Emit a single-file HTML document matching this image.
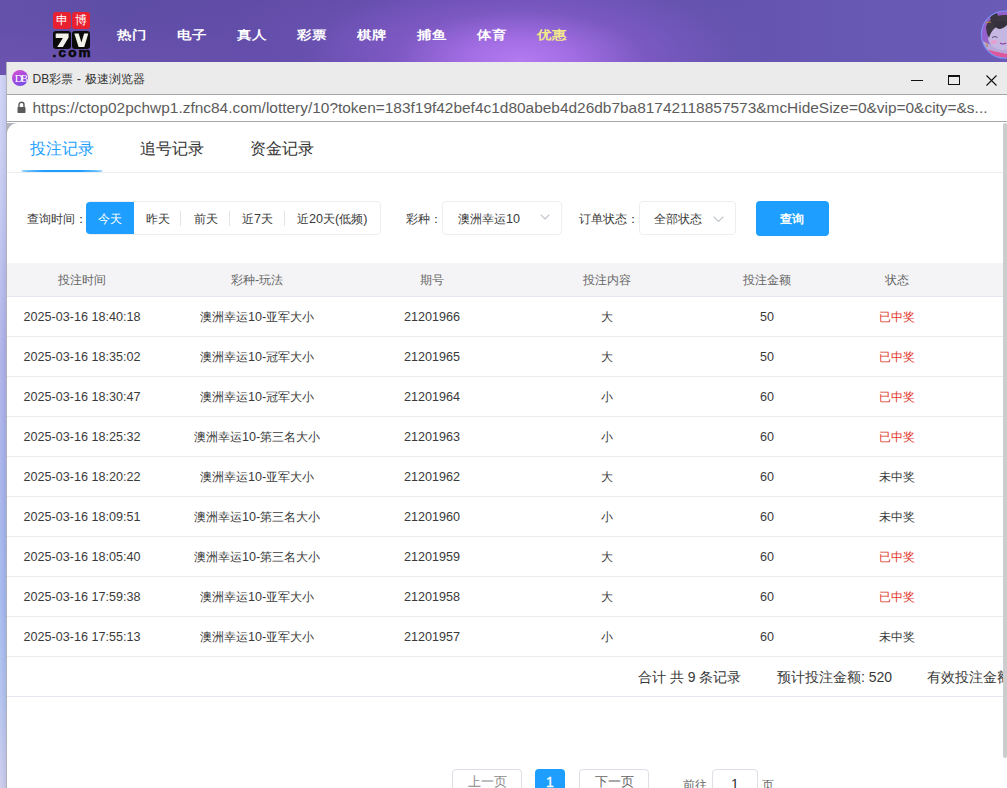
<!DOCTYPE html>
<html><head><meta charset="utf-8">
<style>
*{box-sizing:border-box;margin:0;padding:0}
html,body{width:1007px;height:788px;overflow:hidden;background:#fff;font-family:"Liberation Sans",sans-serif;position:relative}
.a{position:absolute}
.t{position:absolute;white-space:nowrap}
#hdr{left:0;top:0;width:1007px;height:76px;
 background:
  radial-gradient(ellipse 215px 85px at 520px 60px, rgba(180,122,240,1) 0%, rgba(168,112,232,0.9) 25%, rgba(140,95,210,0.5) 58%, rgba(120,80,190,0) 100%),
  radial-gradient(ellipse 330px 100px at 440px 45px, rgba(128,90,198,0.6) 0%, rgba(125,88,195,0) 100%),
  radial-gradient(ellipse 300px 60px at 0px 75px, rgba(112,84,178,0.8) 0%, rgba(112,84,178,0) 100%),
  linear-gradient(90deg,#6351aa 0%,#5a4aa1 25%,#5b4aa2 45%,#6555b0 75%,#6a5cb6 100%);}
</style></head><body>
<div class="a" id="hdr"></div>
<div class="a" style="left:53px;top:12px;width:18px;height:17px;background:#e8202f;border-radius:3px"></div>
<div class="a" style="left:72px;top:12px;width:18px;height:17px;background:#e8202f;border-radius:3px"></div>
<div class="t" style="left:53.0px;top:12px;width:18px;text-align:center;line-height:17px;font-size:12px;color:#fff">申</div>
<div class="t" style="left:72.0px;top:12px;width:18px;text-align:center;line-height:17px;font-size:12px;color:#fff">博</div>
<div class="a" style="left:53px;top:31px;width:18px;height:18px;background:#0a0a0a;border-radius:3px"></div>
<div class="a" style="left:72px;top:31px;width:18px;height:18px;background:#0a0a0a;border-radius:3px"></div>
<svg class="a" style="left:0;top:0" width="100" height="60" viewBox="0 0 100 60"><path d="M55.7 33.5H68.6V37.6L62.9 47.1H57.2L62.9 37.9H55.7Z" fill="#f2f2ea"/><path d="M74.3 33.5H78.7L81.4 42.6L84.1 33.5H88.3L84.3 47.1H78.6Z" fill="#f2f2ea"/></svg>
<div class="t" style="left:52.5px;top:46.4px;line-height:14px;font-size:13.5px;font-weight:bold;color:#0a0a0a;letter-spacing:2.2px;-webkit-text-stroke:0.6px #0a0a0a">.com</div>
<div class="t" style="left:117px;top:26.7px;line-height:18px;font-size:14.5px;font-weight:bold;color:#fff;transform:scaleY(0.83);transform-origin:0 0">热门</div>
<div class="t" style="left:177px;top:26.7px;line-height:18px;font-size:14.5px;font-weight:bold;color:#fff;transform:scaleY(0.83);transform-origin:0 0">电子</div>
<div class="t" style="left:237px;top:26.7px;line-height:18px;font-size:14.5px;font-weight:bold;color:#fff;transform:scaleY(0.83);transform-origin:0 0">真人</div>
<div class="t" style="left:297px;top:26.7px;line-height:18px;font-size:14.5px;font-weight:bold;color:#fff;transform:scaleY(0.83);transform-origin:0 0">彩票</div>
<div class="t" style="left:357px;top:26.7px;line-height:18px;font-size:14.5px;font-weight:bold;color:#fff;transform:scaleY(0.83);transform-origin:0 0">棋牌</div>
<div class="t" style="left:417px;top:26.7px;line-height:18px;font-size:14.5px;font-weight:bold;color:#fff;transform:scaleY(0.83);transform-origin:0 0">捕鱼</div>
<div class="t" style="left:477px;top:26.7px;line-height:18px;font-size:14.5px;font-weight:bold;color:#fff;transform:scaleY(0.83);transform-origin:0 0">体育</div>
<div class="t" style="left:537px;top:26.7px;line-height:18px;font-size:14.5px;font-weight:bold;color:#f2ea8a;transform:scaleY(0.83);transform-origin:0 0">优惠</div>
<svg class="a" style="left:979px;top:9px" width="28" height="52" viewBox="979 9 28 52">
<defs><clipPath id="avc"><circle cx="1005" cy="34.6" r="23.5"/></clipPath></defs>
<g clip-path="url(#avc)">
<rect x="979" y="9" width="60" height="52" fill="#9660cc"/>
<path d="M981 40 Q990 46 1007 47 V61 H981Z" fill="#b8a6d8"/>
<ellipse cx="1003" cy="37" rx="15" ry="13" fill="#c5b6e2"/>
<path d="M986 27 Q990 14 1007 15 V25 Q1000 24 995 28 Q991 31 989 38 Q986 33 986 27Z" fill="#3b3642"/>
<path d="M993 22 Q995 28 999 29 Q1003 29 1007 25 V21 H995Z" fill="#35313c"/>
<circle cx="994" cy="16.5" r="4" fill="#3a3440"/>
<path d="M984 22.5 L991 22" stroke="#c0883a" stroke-width="1"/>
<ellipse cx="994" cy="42" rx="3" ry="2" fill="#e6a0d0"/>
<path d="M992 37.5 Q995 35.5 997.5 37.5" stroke="#5a3a6a" stroke-width="0.9" fill="none"/>
<path d="M1000 43 Q1003 45 1006 43" stroke="#8a3a9a" stroke-width="1.2" fill="none"/>
<path d="M986 42 Q988 44 987 47" stroke="#b08040" stroke-width="1" fill="none"/>
<path d="M985 49 Q996 52 1007 54 V61 H985Z" fill="#e0569a"/>
</g>
<circle cx="1005" cy="34.6" r="23.6" fill="none" stroke="#7d8ef2" stroke-width="1.2"/>
</svg>
<div class="a" style="left:0px;top:75px;width:7px;height:713px;background:linear-gradient(180deg,#cdd2f6 0px,#c2c7f1 125px,#aaaee7 275px,#a3afea 395px,#9fb5ee 525px,#afc0ee 625px,#cacaec 713px)"></div>
<div class="a" style="left:0px;top:75px;width:6px;height:713px;background:linear-gradient(90deg,rgba(255,255,255,0.12),rgba(0,0,40,0.04))"></div>
<div class="a" style="left:6px;top:62px;width:1px;height:726px;background:#b0b0b8"></div>
<div class="a" style="left:7px;top:62px;width:1000px;height:32px;background:#ebebeb"></div>
<div class="a" style="left:12px;top:70px;width:16px;height:16px;border-radius:50%;background:linear-gradient(150deg,#e050d0,#a04ae0 50%,#6a50e8)"></div>
<div class="t" style="left:12.5px;top:71px;width:16px;text-align:center;line-height:14px;font-size:11px;color:#fff;font-family:'Liberation Serif',serif;letter-spacing:-2px">DB</div>
<div class="t" style="left:32.5px;top:71px;line-height:15px;font-size:12px;color:#333">DB彩票<span style="font-size:13px"> - </span>极速浏览器</div>
<div class="a" style="left:911px;top:80px;width:12px;height:1px;background:#111"></div>
<div class="a" style="left:948px;top:75px;width:12px;height:10px;border:1px solid #111;border-top-width:2px"></div>
<svg class="a" style="left:986px;top:75px" width="11" height="11" viewBox="0 0 11 11"><path d="M0.5 0.5L10.5 10.5M10.5 0.5L0.5 10.5" stroke="#111" stroke-width="1.1"/></svg>
<div class="a" style="left:7px;top:94px;width:1000px;height:28px;background:#fff;border-top:1px solid #a6a6a6;border-bottom:1px solid #a6a6a6"></div>
<svg class="a" style="left:17px;top:101px" width="9" height="12" viewBox="0 0 9 12"><path d="M2 6V3.8A2.5 2.5 0 0 1 7 3.8V6" fill="none" stroke="#5a5a5a" stroke-width="1.4"/><rect x="0.5" y="6" width="8" height="6" rx="0.8" fill="#5a5a5a"/></svg>
<div class="t" style="left:32.5px;top:99px;line-height:18px;font-size:15.45px;color:#5c5c5c">https://ctop02pchwp1.zfnc84.com/lottery/10?token=183f19f42bef4c1d80abeb4d26db7ba81742118857573&amp;mcHideSize=0&amp;vip=0&amp;city=&amp;s...</div>
<div class="a" style="left:7px;top:122px;width:1000px;height:666px;background:#fff"></div>
<div class="a" style="left:7px;top:123px;width:1000px;height:665px;background:#b2b5bf"></div>
<div class="a" style="left:7px;top:123px;width:1000px;height:665px;background:#fff;border-top-left-radius:11px"></div>
<div class="t" style="left:30px;top:139px;line-height:20px;font-size:16px;color:#1e9fff">投注记录</div>
<div class="t" style="left:140px;top:139px;line-height:20px;font-size:16px;color:#333">追号记录</div>
<div class="t" style="left:250px;top:139px;line-height:20px;font-size:16px;color:#333">资金记录</div>
<div class="a" style="left:7px;top:172px;width:1000px;height:1px;background:#eeeeee"></div>
<div class="a" style="left:21px;top:170px;width:82px;height:2.2px;background:#1e9fff;border-radius:41px/1.1px"></div>
<div class="t" style="left:27px;top:210.7px;line-height:16px;font-size:12px;color:#3a3a3a">查询时间：</div>
<div class="a" style="left:86px;top:201px;width:295px;height:34px;border:1px solid #eceef2;border-radius:4px"></div>
<div class="a" style="left:86px;top:202px;width:48px;height:32px;background:#1e9fff;border-radius:4px 0 0 4px"></div>
<div class="t" style="left:98px;top:210.7px;line-height:16px;font-size:12px;color:#fff">今天</div>
<div class="t" style="left:146px;top:210.7px;line-height:16px;font-size:12px;color:#3a3a3a">昨天</div>
<div class="a" style="left:180px;top:210.7px;width:1px;height:15px;background:#e4e4e4"></div>
<div class="t" style="left:194px;top:210.7px;line-height:16px;font-size:12px;color:#3a3a3a">前天</div>
<div class="a" style="left:229px;top:210.7px;width:1px;height:15px;background:#e4e4e4"></div>
<div class="t" style="left:242px;top:210.7px;line-height:16px;font-size:12px;color:#3a3a3a">近<span style="font-size:12.6px">7</span>天</div>
<div class="a" style="left:284px;top:210.7px;width:1px;height:15px;background:#e4e4e4"></div>
<div class="t" style="left:297px;top:210.7px;line-height:16px;font-size:12px;color:#3a3a3a">近<span style="font-size:12.6px">20</span>天<span style="font-size:12.6px">(</span>低频<span style="font-size:12.6px">)</span></div>
<div class="t" style="left:406px;top:210.7px;line-height:16px;font-size:12px;color:#3a3a3a">彩种：</div>
<div class="a" style="left:442px;top:201px;width:120px;height:34px;border:1px solid #eceef2;border-radius:4px"></div>
<div class="t" style="left:458px;top:210.7px;line-height:16px;font-size:12px;color:#3a3a3a">澳洲幸运<span style="font-size:12.6px">10</span></div>
<svg class="a" style="left:539.5px;top:213.5px" width="10" height="6" viewBox="0 0 10 6"><path d="M0.6 0.6L5 5L9.4 0.6" fill="none" stroke="#c0c4cc" stroke-width="1.2"/></svg>
<div class="t" style="left:579px;top:210.7px;line-height:16px;font-size:12px;color:#3a3a3a">订单状态：</div>
<div class="a" style="left:639px;top:201px;width:97px;height:34px;border:1px solid #eceef2;border-radius:4px"></div>
<div class="t" style="left:654px;top:210.7px;line-height:16px;font-size:12px;color:#3a3a3a">全部状态</div>
<svg class="a" style="left:713px;top:215.8px" width="11" height="7" viewBox="0 0 11 7"><path d="M0.6 0.6L5.5 5.5L10.4 0.6" fill="none" stroke="#c0c4cc" stroke-width="1.2"/></svg>
<div class="a" style="left:756px;top:201px;width:73px;height:35px;background:#1e9fff;border-radius:4px"></div>
<div class="t" style="left:755.3px;top:211px;width:73px;text-align:center;line-height:16px;font-size:12px;font-weight:bold;color:#fff">查询</div>
<div class="a" style="left:7px;top:263px;width:1000px;height:33px;background:#f4f4f6"></div>
<div class="a" style="left:7px;top:296px;width:1000px;height:1px;background:#e5e8f2"></div>
<div class="t" style="left:-68.0px;top:272px;width:300px;text-align:center;line-height:16px;font-size:12px;color:#666">投注时间</div>
<div class="t" style="left:107.0px;top:272px;width:300px;text-align:center;line-height:16px;font-size:12px;color:#666">彩种<span style="font-size:12.6px">-</span>玩法</div>
<div class="t" style="left:282.0px;top:272px;width:300px;text-align:center;line-height:16px;font-size:12px;color:#666">期号</div>
<div class="t" style="left:457.0px;top:272px;width:300px;text-align:center;line-height:16px;font-size:12px;color:#666">投注内容</div>
<div class="t" style="left:617.0px;top:272px;width:300px;text-align:center;line-height:16px;font-size:12px;color:#666">投注金额</div>
<div class="t" style="left:747.0px;top:272px;width:300px;text-align:center;line-height:16px;font-size:12px;color:#666">状态</div>
<div class="a" style="left:7px;top:336px;width:1000px;height:1px;background:#ececec"></div>
<div class="t" style="left:-68.0px;top:308.7px;width:300px;text-align:center;line-height:16px;font-size:12px;color:#3a3a3a"><span style="font-size:12.6px">2025-03-16 18:40:18</span></div>
<div class="t" style="left:107.0px;top:308.7px;width:300px;text-align:center;line-height:16px;font-size:12px;color:#3a3a3a">澳洲幸运<span style="font-size:12.6px">10-</span>亚军大小</div>
<div class="t" style="left:282.0px;top:308.7px;width:300px;text-align:center;line-height:16px;font-size:12px;color:#3a3a3a"><span style="font-size:12.6px">21201966</span></div>
<div class="t" style="left:457.0px;top:308.7px;width:300px;text-align:center;line-height:16px;font-size:12px;color:#3a3a3a">大</div>
<div class="t" style="left:617.0px;top:308.7px;width:300px;text-align:center;line-height:16px;font-size:12px;color:#3a3a3a"><span style="font-size:12.6px">50</span></div>
<div class="t" style="left:747.0px;top:308.7px;width:300px;text-align:center;line-height:16px;font-size:12px;color:#e2352a">已中奖</div>
<div class="a" style="left:7px;top:376px;width:1000px;height:1px;background:#ececec"></div>
<div class="t" style="left:-68.0px;top:348.7px;width:300px;text-align:center;line-height:16px;font-size:12px;color:#3a3a3a"><span style="font-size:12.6px">2025-03-16 18:35:02</span></div>
<div class="t" style="left:107.0px;top:348.7px;width:300px;text-align:center;line-height:16px;font-size:12px;color:#3a3a3a">澳洲幸运<span style="font-size:12.6px">10-</span>冠军大小</div>
<div class="t" style="left:282.0px;top:348.7px;width:300px;text-align:center;line-height:16px;font-size:12px;color:#3a3a3a"><span style="font-size:12.6px">21201965</span></div>
<div class="t" style="left:457.0px;top:348.7px;width:300px;text-align:center;line-height:16px;font-size:12px;color:#3a3a3a">大</div>
<div class="t" style="left:617.0px;top:348.7px;width:300px;text-align:center;line-height:16px;font-size:12px;color:#3a3a3a"><span style="font-size:12.6px">50</span></div>
<div class="t" style="left:747.0px;top:348.7px;width:300px;text-align:center;line-height:16px;font-size:12px;color:#e2352a">已中奖</div>
<div class="a" style="left:7px;top:416px;width:1000px;height:1px;background:#ececec"></div>
<div class="t" style="left:-68.0px;top:388.7px;width:300px;text-align:center;line-height:16px;font-size:12px;color:#3a3a3a"><span style="font-size:12.6px">2025-03-16 18:30:47</span></div>
<div class="t" style="left:107.0px;top:388.7px;width:300px;text-align:center;line-height:16px;font-size:12px;color:#3a3a3a">澳洲幸运<span style="font-size:12.6px">10-</span>冠军大小</div>
<div class="t" style="left:282.0px;top:388.7px;width:300px;text-align:center;line-height:16px;font-size:12px;color:#3a3a3a"><span style="font-size:12.6px">21201964</span></div>
<div class="t" style="left:457.0px;top:388.7px;width:300px;text-align:center;line-height:16px;font-size:12px;color:#3a3a3a">小</div>
<div class="t" style="left:617.0px;top:388.7px;width:300px;text-align:center;line-height:16px;font-size:12px;color:#3a3a3a"><span style="font-size:12.6px">60</span></div>
<div class="t" style="left:747.0px;top:388.7px;width:300px;text-align:center;line-height:16px;font-size:12px;color:#e2352a">已中奖</div>
<div class="a" style="left:7px;top:456px;width:1000px;height:1px;background:#ececec"></div>
<div class="t" style="left:-68.0px;top:428.7px;width:300px;text-align:center;line-height:16px;font-size:12px;color:#3a3a3a"><span style="font-size:12.6px">2025-03-16 18:25:32</span></div>
<div class="t" style="left:107.0px;top:428.7px;width:300px;text-align:center;line-height:16px;font-size:12px;color:#3a3a3a">澳洲幸运<span style="font-size:12.6px">10-</span>第三名大小</div>
<div class="t" style="left:282.0px;top:428.7px;width:300px;text-align:center;line-height:16px;font-size:12px;color:#3a3a3a"><span style="font-size:12.6px">21201963</span></div>
<div class="t" style="left:457.0px;top:428.7px;width:300px;text-align:center;line-height:16px;font-size:12px;color:#3a3a3a">小</div>
<div class="t" style="left:617.0px;top:428.7px;width:300px;text-align:center;line-height:16px;font-size:12px;color:#3a3a3a"><span style="font-size:12.6px">60</span></div>
<div class="t" style="left:747.0px;top:428.7px;width:300px;text-align:center;line-height:16px;font-size:12px;color:#e2352a">已中奖</div>
<div class="a" style="left:7px;top:496px;width:1000px;height:1px;background:#ececec"></div>
<div class="t" style="left:-68.0px;top:468.7px;width:300px;text-align:center;line-height:16px;font-size:12px;color:#3a3a3a"><span style="font-size:12.6px">2025-03-16 18:20:22</span></div>
<div class="t" style="left:107.0px;top:468.7px;width:300px;text-align:center;line-height:16px;font-size:12px;color:#3a3a3a">澳洲幸运<span style="font-size:12.6px">10-</span>亚军大小</div>
<div class="t" style="left:282.0px;top:468.7px;width:300px;text-align:center;line-height:16px;font-size:12px;color:#3a3a3a"><span style="font-size:12.6px">21201962</span></div>
<div class="t" style="left:457.0px;top:468.7px;width:300px;text-align:center;line-height:16px;font-size:12px;color:#3a3a3a">大</div>
<div class="t" style="left:617.0px;top:468.7px;width:300px;text-align:center;line-height:16px;font-size:12px;color:#3a3a3a"><span style="font-size:12.6px">60</span></div>
<div class="t" style="left:747.0px;top:468.7px;width:300px;text-align:center;line-height:16px;font-size:12px;color:#3a3a3a">未中奖</div>
<div class="a" style="left:7px;top:536px;width:1000px;height:1px;background:#ececec"></div>
<div class="t" style="left:-68.0px;top:508.7px;width:300px;text-align:center;line-height:16px;font-size:12px;color:#3a3a3a"><span style="font-size:12.6px">2025-03-16 18:09:51</span></div>
<div class="t" style="left:107.0px;top:508.7px;width:300px;text-align:center;line-height:16px;font-size:12px;color:#3a3a3a">澳洲幸运<span style="font-size:12.6px">10-</span>第三名大小</div>
<div class="t" style="left:282.0px;top:508.7px;width:300px;text-align:center;line-height:16px;font-size:12px;color:#3a3a3a"><span style="font-size:12.6px">21201960</span></div>
<div class="t" style="left:457.0px;top:508.7px;width:300px;text-align:center;line-height:16px;font-size:12px;color:#3a3a3a">小</div>
<div class="t" style="left:617.0px;top:508.7px;width:300px;text-align:center;line-height:16px;font-size:12px;color:#3a3a3a"><span style="font-size:12.6px">60</span></div>
<div class="t" style="left:747.0px;top:508.7px;width:300px;text-align:center;line-height:16px;font-size:12px;color:#3a3a3a">未中奖</div>
<div class="a" style="left:7px;top:576px;width:1000px;height:1px;background:#ececec"></div>
<div class="t" style="left:-68.0px;top:548.7px;width:300px;text-align:center;line-height:16px;font-size:12px;color:#3a3a3a"><span style="font-size:12.6px">2025-03-16 18:05:40</span></div>
<div class="t" style="left:107.0px;top:548.7px;width:300px;text-align:center;line-height:16px;font-size:12px;color:#3a3a3a">澳洲幸运<span style="font-size:12.6px">10-</span>第三名大小</div>
<div class="t" style="left:282.0px;top:548.7px;width:300px;text-align:center;line-height:16px;font-size:12px;color:#3a3a3a"><span style="font-size:12.6px">21201959</span></div>
<div class="t" style="left:457.0px;top:548.7px;width:300px;text-align:center;line-height:16px;font-size:12px;color:#3a3a3a">大</div>
<div class="t" style="left:617.0px;top:548.7px;width:300px;text-align:center;line-height:16px;font-size:12px;color:#3a3a3a"><span style="font-size:12.6px">60</span></div>
<div class="t" style="left:747.0px;top:548.7px;width:300px;text-align:center;line-height:16px;font-size:12px;color:#e2352a">已中奖</div>
<div class="a" style="left:7px;top:616px;width:1000px;height:1px;background:#ececec"></div>
<div class="t" style="left:-68.0px;top:588.7px;width:300px;text-align:center;line-height:16px;font-size:12px;color:#3a3a3a"><span style="font-size:12.6px">2025-03-16 17:59:38</span></div>
<div class="t" style="left:107.0px;top:588.7px;width:300px;text-align:center;line-height:16px;font-size:12px;color:#3a3a3a">澳洲幸运<span style="font-size:12.6px">10-</span>亚军大小</div>
<div class="t" style="left:282.0px;top:588.7px;width:300px;text-align:center;line-height:16px;font-size:12px;color:#3a3a3a"><span style="font-size:12.6px">21201958</span></div>
<div class="t" style="left:457.0px;top:588.7px;width:300px;text-align:center;line-height:16px;font-size:12px;color:#3a3a3a">大</div>
<div class="t" style="left:617.0px;top:588.7px;width:300px;text-align:center;line-height:16px;font-size:12px;color:#3a3a3a"><span style="font-size:12.6px">60</span></div>
<div class="t" style="left:747.0px;top:588.7px;width:300px;text-align:center;line-height:16px;font-size:12px;color:#e2352a">已中奖</div>
<div class="a" style="left:7px;top:656px;width:1000px;height:1px;background:#ececec"></div>
<div class="t" style="left:-68.0px;top:628.7px;width:300px;text-align:center;line-height:16px;font-size:12px;color:#3a3a3a"><span style="font-size:12.6px">2025-03-16 17:55:13</span></div>
<div class="t" style="left:107.0px;top:628.7px;width:300px;text-align:center;line-height:16px;font-size:12px;color:#3a3a3a">澳洲幸运<span style="font-size:12.6px">10-</span>亚军大小</div>
<div class="t" style="left:282.0px;top:628.7px;width:300px;text-align:center;line-height:16px;font-size:12px;color:#3a3a3a"><span style="font-size:12.6px">21201957</span></div>
<div class="t" style="left:457.0px;top:628.7px;width:300px;text-align:center;line-height:16px;font-size:12px;color:#3a3a3a">小</div>
<div class="t" style="left:617.0px;top:628.7px;width:300px;text-align:center;line-height:16px;font-size:12px;color:#3a3a3a"><span style="font-size:12.6px">60</span></div>
<div class="t" style="left:747.0px;top:628.7px;width:300px;text-align:center;line-height:16px;font-size:12px;color:#3a3a3a">未中奖</div>
<div class="t" style="left:638px;top:669px;line-height:16px;font-size:14px;color:#383838">合计 共 9 条记录</div>
<div class="t" style="left:777px;top:669px;line-height:16px;font-size:14px;color:#383838">预计投注金额: 520</div>
<div class="t" style="left:927px;top:669px;line-height:16px;font-size:14px;color:#383838">有效投注金额</div>
<div class="a" style="left:7px;top:696px;width:1000px;height:1px;background:#e6e7f5"></div>
<div class="a" style="left:452px;top:769px;width:70px;height:32px;border:1px solid #dcdfe6;border-radius:4px"></div>
<div class="t" style="left:452.0px;top:774.3px;width:70px;text-align:center;line-height:16px;font-size:13px;color:#8c8c8c">上一页</div>
<div class="a" style="left:535px;top:769px;width:30px;height:32px;background:#1e9fff;border-radius:4px"></div>
<div class="t" style="left:535.0px;top:774px;width:30px;text-align:center;line-height:16px;font-size:14px;color:#fff;-webkit-text-stroke:0.3px #fff">1</div>
<div class="a" style="left:579px;top:769px;width:70px;height:32px;border:1px solid #dcdfe6;border-radius:4px"></div>
<div class="t" style="left:579.0px;top:774.3px;width:70px;text-align:center;line-height:16px;font-size:13px;color:#666">下一页</div>
<div class="t" style="left:683px;top:777px;line-height:16px;font-size:12px;color:#666">前往</div>
<div class="a" style="left:712px;top:769px;width:46px;height:32px;border:1px solid #dcdfe6;border-radius:4px"></div>
<div class="t" style="left:712.0px;top:776px;width:46px;text-align:center;line-height:16px;font-size:14px;color:#333">1</div>
<div class="t" style="left:762px;top:777px;line-height:16px;font-size:12px;color:#666">页</div>
<div class="a" style="left:1003px;top:123px;width:4px;height:635px;background:#cdcdcd;border-radius:2px"></div>
</body></html>
